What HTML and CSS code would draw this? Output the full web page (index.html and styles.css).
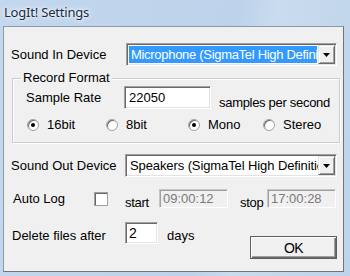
FILE: index.html
```html
<!DOCTYPE html>
<html lang="en">
<head>
  <meta charset="UTF-8">
  <title>LogIt! Settings</title>
  <link rel="stylesheet" href="styles.css">
</head>
<body>
  <div class="window">
    <div class="titlebar"><span class="title">LogIt! Settings</span></div>

    <div class="client">
      <div class="row row-in">
        <span class="label label-device">Sound In Device</span>
        <div class="combo">
          <span class="combo-text"><span class="selected">Microphone (SigmaTel High Definition Audio)</span></span>
          <span class="combo-btn"><svg width="7" height="4" viewBox="0 0 7 4"><polygon points="0,0 7,0 3.5,4" fill="#000"/></svg></span>
        </div>
      </div>

      <div class="group">
        <span class="legend">Record Format</span>
        <div class="row row-rate">
          <span class="label label-rate">Sample Rate</span>
          <div class="edit edit-rate">22050</div>
          <span class="unit">samples per second</span>
        </div>
        <div class="radios">
          <div class="radio"><span class="dot checked"></span>16bit</div>
          <div class="radio"><span class="dot"></span>8bit</div>
          <div class="radio"><span class="dot checked"></span>Mono</div>
          <div class="radio"><span class="dot"></span>Stereo</div>
        </div>
      </div>

      <div class="row row-out">
        <span class="label label-device">Sound Out Device</span>
        <div class="combo combo-out">
          <span class="combo-text">Speakers (SigmaTel High Definition Audio)</span>
          <span class="combo-btn"><svg width="7" height="4" viewBox="0 0 7 4"><polygon points="0,0 7,0 3.5,4" fill="#000"/></svg></span>
        </div>
      </div>

      <div class="row row-log">
        <span class="label label-log">Auto Log</span>
        <span class="check"></span>
        <span class="small-label label-start">start</span>
        <div class="edit edit-time">09:00:12</div>
        <span class="small-label label-stop">stop</span>
        <div class="edit edit-time">17:00:28</div>
      </div>

      <div class="row row-delete">
        <span class="label label-delete">Delete files after</span>
        <div class="edit edit-days">2</div>
        <span class="label label-days">days</span>
        <div class="ok-btn">OK</div>
      </div>
    </div>
  </div>
</body>
</html>
```

FILE: styles.css
```css
* {
  margin: 0;
  padding: 0;
  box-sizing: border-box;
}

body {
  width: 350px;
  height: 276px;
  overflow: hidden;
  font-family: 'Liberation Sans', Arial, sans-serif;
  font-size: 13px;
  color: #000;
}

.window {
  width: 350px;
  height: 276px;
  display: flex;
  flex-direction: column;
  background: linear-gradient(100deg, #c3d7ed 0%, #bcd3eb 60%, #c9dbee 70%, #bed4ea 100%);
  padding: 0 6px 4px 3px;
}

.titlebar {
  height: 26px;
  display: flex;
  align-items: center;
  padding-left: 1px;
}

.title {
  font-family: 'Noto Sans', 'Open Sans', sans-serif;
  font-size: 13px;
  color: #1b2d44;
  letter-spacing: -0.2px;
  text-shadow: 0 0 6px #fff, 0 0 3px #fff;
  margin-top: -3px;
}

.client {
  flex: 1;
  background: #f0f0f0;
  border: 1px solid #8c98a5;
  border-right-color: #6f7479;
  border-bottom-color: #6f7479;
  padding: 0 6px 0 7px;
  display: flex;
  flex-direction: column;
}

.row {
  display: flex;
  align-items: center;
}

.label {
  white-space: nowrap;
}

.label-device {
  width: 115px;
}

.row-in {
  margin-top: 16px;
}

.row-out {
  margin-top: 11px;
}

/* combo box */
.combo {
  width: 211px;
  height: 23px;
  display: flex;
  background: #fff;
  border: 1px solid;
  border-color: #a0a0a0 #fff #fff #a0a0a0;
  box-shadow: inset 1px 1px #696969, inset -1px -1px #e3e3e3;
  padding: 1px;
}

.row-in .combo {
  margin-left: 1px;
}

.combo-out {
  width: 212px;
}

.combo-text {
  flex: 1;
  overflow: hidden;
  white-space: nowrap;
  padding: 1px;
  line-height: 17px;
}

.combo-out .combo-text {
  padding-left: 3px;
  letter-spacing: -0.1px;
}

.selected {
  display: block;
  background: #3399ff;
  color: #fff;
  padding-left: 2px;
  letter-spacing: -0.3px;
}

.combo-btn {
  width: 17px;
  display: flex;
  align-items: center;
  justify-content: center;
  background: #f0f0f0;
  border: 1px solid;
  border-color: #e3e3e3 #696969 #696969 #e3e3e3;
  box-shadow: inset 1px 1px #fff, inset -1px -1px #a0a0a0;
}

/* group box */
.group {
  position: relative;
  margin: 12px -3px 0 1px;
  border: 1px solid #c9cdd0;
  box-shadow: 1px 1px #fff, inset 1px 1px #fff;
  padding: 7px 0 11px 13px;
}

.legend {
  position: absolute;
  top: -9px;
  left: 8px;
  background: #f0f0f0;
  padding: 0 2px;
  line-height: 16px;
}

.label-rate {
  width: 98px;
}

.edit {
  background: #fff;
  border: 1px solid;
  border-color: #a0a0a0 #fff #fff #a0a0a0;
  box-shadow: inset 1px 1px #696969, inset -1px -1px #e3e3e3;
  padding: 0 3px;
  white-space: nowrap;
}

.edit-rate {
  width: 87px;
  height: 23px;
  line-height: 21px;
  padding-left: 4px;
}

.unit {
  margin-left: 8px;
  align-self: flex-end;
  margin-bottom: -1px;
  letter-spacing: -0.3px;
}

.radios {
  display: grid;
  grid-template-columns: 79px 82px 75px auto;
  margin-top: 8px;
  margin-left: 1px;
  height: 14px;
  align-items: center;
}

.radio {
  display: flex;
  align-items: center;
  gap: 8px;
}

.dot {
  width: 12px;
  height: 12px;
  border-radius: 50%;
  background: #fff;
  border: 1px solid #a0a0a0;
  box-shadow: inset 1px 1px #696969;
  display: flex;
  align-items: center;
  justify-content: center;
}

.dot.checked::after {
  content: '';
  width: 4px;
  height: 4px;
  border-radius: 50%;
  background: #000;
}

/* auto log row */
.row-log {
  margin-top: 12px;
  height: 19px;
}

.label-log {
  width: 83px;
  padding-left: 2px;
}

.check {
  width: 14px;
  height: 14px;
  background: #fff;
  border: 1px solid #a0a0a0;
  box-shadow: inset 1px 1px #696969;
}

.small-label {
  align-self: flex-end;
  margin-bottom: -2px;
  letter-spacing: -0.3px;
}

.label-start {
  margin-left: 17px;
  width: 34px;
}

.label-stop {
  margin-left: 12px;
  width: 27px;
}

.edit-time {
  width: 69px;
  height: 19px;
  line-height: 17px;
  background: #f0f0f0;
  color: #7a7a7a;
  border-color: #c5c5c5 #fff #fff #c5c5c5;
  box-shadow: inset 1px 1px #a0a0a0;
}

/* delete row */
.row-delete {
  margin-top: 14px;
  align-items: flex-start;
}

.label-delete {
  width: 114px;
  padding-left: 1px;
  line-height: 28px;
}

.edit-days {
  width: 33px;
  height: 22px;
  line-height: 20px;
  font-size: 14px;
  padding-left: 3px;
}

.label-days {
  margin-left: 9px;
  line-height: 28px;
}

.ok-btn {
  margin-left: auto;
  margin-top: 14px;
  width: 87px;
  height: 23px;
  display: flex;
  align-items: center;
  justify-content: center;
  background: #f0f0f0;
  border: 1px solid #5e5e5e;
  box-shadow: inset 1px 1px #fff, inset -1px -1px #696969, inset -2px -2px #a0a0a0;
  font-size: 14px;
  letter-spacing: -0.5px;
}
```
